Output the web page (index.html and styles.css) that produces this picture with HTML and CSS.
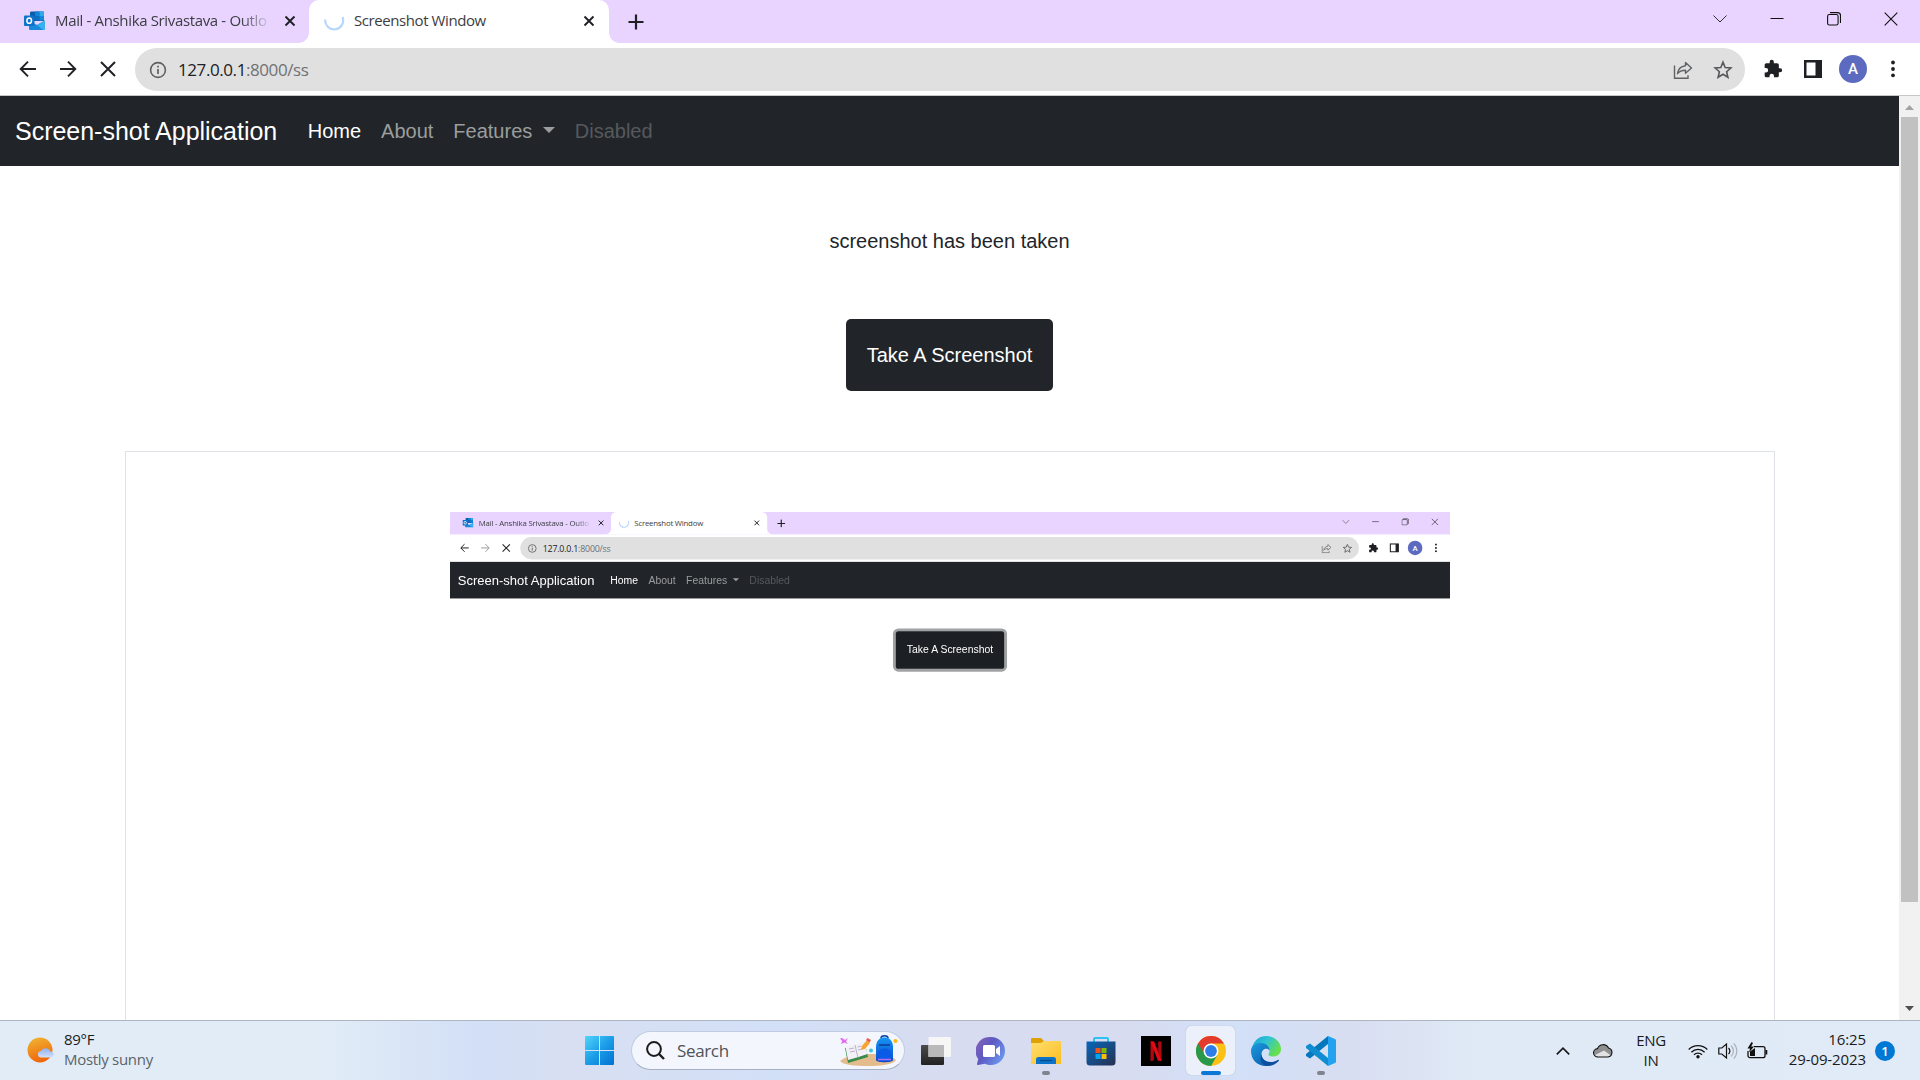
FILE: index.html
```html
<!DOCTYPE html>
<html lang="en">
<head>
<meta charset="utf-8">
<title>Screenshot Window</title>
<link rel="stylesheet" href="styles.css">
</head>
<body>
<svg class="sprite" aria-hidden="true">
  <defs>
    <linearGradient id="gWin" x2="1" y2="1"><stop offset="0" stop-color="#52d5fb"/><stop offset=".5" stop-color="#1b9de8"/><stop offset="1" stop-color="#0270d0"/></linearGradient>
    <linearGradient id="gSun" x2=".3" y2="1"><stop offset="0" stop-color="#f0b832"/><stop offset="1" stop-color="#f0680c"/></linearGradient>
    <linearGradient id="gCloud" x2="0" y2="1"><stop offset="0" stop-color="#8fb2f2"/><stop offset="1" stop-color="#d4e0fb"/></linearGradient>
    <linearGradient id="gChat" x2="1" y2=".6"><stop offset="0" stop-color="#8a62b4"/><stop offset=".5" stop-color="#5d5ac4"/><stop offset="1" stop-color="#6b93ea"/></linearGradient>
    <linearGradient id="gFolder" x2="1" y2="1"><stop offset="0" stop-color="#ffdf70"/><stop offset="1" stop-color="#fbbd22"/></linearGradient>
    <linearGradient id="gStore" x2="1" y2="1"><stop offset="0" stop-color="#0867bb"/><stop offset="1" stop-color="#27304f"/></linearGradient>
    <linearGradient id="gEdge" x2="1" y2=".5"><stop offset="0" stop-color="#1aa0dc"/><stop offset=".5" stop-color="#2fc3d3"/><stop offset="1" stop-color="#66e04c"/></linearGradient>
    <linearGradient id="gEdge2" x2="1" y2="1"><stop offset="0" stop-color="#1b9ce0"/><stop offset="1" stop-color="#0b4da0"/></linearGradient>
    <linearGradient id="gDark" x2="0" y2="1"><stop offset="0" stop-color="#4a4a4a"/><stop offset="1" stop-color="#222"/></linearGradient>
    <linearGradient id="gPack" x2="0" y2="1"><stop offset="0" stop-color="#1597f5"/><stop offset="1" stop-color="#0b49c8"/></linearGradient>
  </defs>
  <symbol id="outlook" viewBox="0 0 21 19">
    <path d="M6 1.500a1 1 0 0 1 1-1h12a1 1 0 0 1 1 1V10H6z" fill="#0a5cae"/>
    <path d="M11 .5h4.500V5H11z" fill="#1284d8"/><path d="M15.500 .5H19a1 1 0 0 1 1 1V5h-4.500z" fill="#30a9ea"/>
    <path d="M11 5h4.500v4.500H11z" fill="#0f6dc2"/><path d="M15.500 5H20v4.500h-4.500z" fill="#1488dc"/>
    <path d="M5 9.500l8 4.500 7.700-4.500V18a1 1 0 0 1-1 1H6a1 1 0 0 1-1-1z" fill="#1989da"/>
    <path d="M20.700 9.500V18a1 1 0 0 1-1 1H19l-6-5z" fill="#36b1ef"/>
    <rect x="0" y="4.500" width="10.500" height="10.500" rx="1" fill="#0f74c9"/>
    <ellipse cx="5.200" cy="9.700" rx="2.300" ry="2.600" fill="none" stroke="#fff" stroke-width="1.500"/>
  </symbol>
  <symbol id="close" viewBox="0 0 12 12"><path d="M1.500 1.500l9 9M10.500 1.500l-9 9" stroke="#1f2023" stroke-width="1.900" fill="none"/></symbol>
  <symbol id="spinner" viewBox="0 0 22 22"><path d="M2.200 8.500A9 9 0 1 0 19.500 6" fill="none" stroke="#b9d6fb" stroke-width="2.200"/></symbol>
  <symbol id="plus" viewBox="0 0 16 16"><path d="M8 .5v15M.5 8h15" stroke="#1f2023" stroke-width="2.200"/></symbol>
  <symbol id="chev" viewBox="0 0 14 14"><path d="M.5 3.500L7 10l6.500-6.500" fill="none" stroke="#333" stroke-width="1"/></symbol>
  <symbol id="min" viewBox="0 0 14 14"><path d="M.5 6.500h13" stroke="#111" stroke-width="1"/></symbol>
  <symbol id="restore" viewBox="0 0 14 14"><rect x=".6" y="2.500" width="10.500" height="10.500" rx="1.800" fill="none" stroke="#111" stroke-width="1.100"/><path d="M3 .6h7.500a3 3 0 0 1 3 3V11" fill="none" stroke="#111" stroke-width="1.100"/></symbol>
  <symbol id="wclose" viewBox="0 0 14 14"><path d="M.7.7l12.600 12.600M13.300.7L.7 13.300" stroke="#111" stroke-width="1.100"/></symbol>
  <symbol id="back" viewBox="0 0 18 18"><path d="M17 9H2M9 1.700L1.700 9 9 16.300" fill="none" stroke="currentColor" stroke-width="1.900"/></symbol>
  <symbol id="fwd" viewBox="0 0 18 18"><path d="M1 9h15M9 1.700L16.300 9 9 16.300" fill="none" stroke="currentColor" stroke-width="1.900"/></symbol>
  <symbol id="stop" viewBox="0 0 18 18"><path d="M2 2l14 14M16 2L2 16" stroke="currentColor" stroke-width="2"/></symbol>
  <symbol id="info" viewBox="0 0 18 18"><circle cx="9" cy="9" r="7.400" fill="none" stroke="#5f6063" stroke-width="1.600"/><path d="M9 8v5M9 4.700v1.800" stroke="#5f6063" stroke-width="1.700"/></symbol>
  <symbol id="share" viewBox="0 0 20 18"><path d="M1.500 4.500v12.700h13.500v-3" fill="none" stroke="#606266" stroke-width="1.400"/><path d="M12.500 1.500l6 5.500-6 5.200V9.200C9 9.200 6.500 10 4.500 12.700 5 8.500 7.500 5.300 12.500 4.700z" fill="none" stroke="#606266" stroke-width="1.400" stroke-linejoin="round"/></symbol>
  <symbol id="star" viewBox="0 0 20 20"><path d="M10 2.200l2.200 5.300 5.700.5-4.300 3.700 1.300 5.600-4.900-3-4.900 3 1.300-5.600L2.100 8l5.700-.5z" fill="none" stroke="#55575b" stroke-width="1.600"/></symbol>
  <symbol id="puzzle" viewBox="0 0 24 24"><path d="M20.500 11H19V7a2 2 0 0 0-2-2h-4V3.500a2.500 2.500 0 0 0-5 0V5H4a2 2 0 0 0-2 2v3.800h1.500a2.700 2.700 0 0 1 0 5.400H2V20a2 2 0 0 0 2 2h3.800v-1.500a2.700 2.700 0 0 1 5.400 0V22H17a2 2 0 0 0 2-2v-4h1.500a2.500 2.500 0 0 0 0-5z" fill="#1f2023"/></symbol>
  <symbol id="panel" viewBox="0 0 18 18"><path d="M0 0h18v18H0zM2.500 2.500v13h9v-13z" fill="#1f2023" fill-rule="evenodd"/></symbol>
  <symbol id="dots" viewBox="0 0 6 18"><circle cx="3" cy="2.500" r="1.900" fill="#1f2023"/><circle cx="3" cy="9" r="1.900" fill="#1f2023"/><circle cx="3" cy="15.300" r="1.900" fill="#1f2023"/></symbol>
</svg>

<div class="screen">
  <header class="chrome">
    <div class="tabstrip">
      <div class="tab">
        <svg class="favicon"><use href="#outlook"/></svg>
        <span class="tab-title fade">Mail - Anshika Srivastava - Outlo</span>
        <svg class="tab-close"><use href="#close"/></svg>
      </div>
      <div class="tab active">
        <svg class="loading"><use href="#spinner"/></svg>
        <span class="tab-title">Screenshot Window</span>
        <svg class="tab-close"><use href="#close"/></svg>
      </div>
      <svg class="new-tab"><use href="#plus"/></svg>
      <div class="controls">
        <svg><use href="#chev"/></svg><svg><use href="#min"/></svg><svg><use href="#restore"/></svg><svg><use href="#wclose"/></svg>
      </div>
    </div>
    <div class="toolbar">
      <span class="cell"><svg class="i18"><use href="#back"/></svg></span>
      <span class="cell"><svg class="i18"><use href="#fwd"/></svg></span>
      <span class="cell"><svg class="i18"><use href="#stop"/></svg></span>
      <div class="omnibox">
        <svg class="i18"><use href="#info"/></svg>
        <span class="url">127.0.0.1<i>:8000/ss</i></span>
        <span class="cell"><svg class="share"><use href="#share"/></svg></span>
        <span class="cell"><svg class="i20"><use href="#star"/></svg></span>
      </div>
      <span class="cell"><svg class="i20"><use href="#puzzle"/></svg></span>
      <span class="cell"><svg class="i18"><use href="#panel"/></svg></span>
      <span class="cell"><b class="avatar">A</b></span>
      <span class="cell"><svg class="dots"><use href="#dots"/></svg></span>
    </div>
  </header>

  <div class="viewport">
    <main class="page">
      <nav class="navbar">
        <a class="brand">Screen-shot Application</a>
        <a class="link on">Home</a><a class="link">About</a><a class="link drop">Features</a><a class="link off">Disabled</a>
      </nav>
      <p class="message">screenshot has been taken</p>
      <button class="shoot">Take A Screenshot</button>
      <section class="card">
        <div class="preview">
          <div class="preview-screen">
            <header class="chrome">
              <div class="tabstrip">
                <div class="tab">
                  <svg class="favicon"><use href="#outlook"/></svg>
                  <span class="tab-title fade">Mail - Anshika Srivastava - Outlo</span>
                  <svg class="tab-close"><use href="#close"/></svg>
                </div>
                <div class="tab active">
                  <svg class="loading"><use href="#spinner"/></svg>
                  <span class="tab-title">Screenshot Window</span>
                  <svg class="tab-close"><use href="#close"/></svg>
                </div>
                <svg class="new-tab"><use href="#plus"/></svg>
                <div class="controls">
                  <svg><use href="#chev"/></svg><svg><use href="#min"/></svg><svg><use href="#restore"/></svg><svg><use href="#wclose"/></svg>
                </div>
              </div>
              <div class="toolbar">
                <span class="cell"><svg class="i18"><use href="#back"/></svg></span>
                <span class="cell muted"><svg class="i18"><use href="#fwd"/></svg></span>
                <span class="cell"><svg class="i18"><use href="#stop"/></svg></span>
                <div class="omnibox">
                  <svg class="i18"><use href="#info"/></svg>
                  <span class="url">127.0.0.1<i>:8000/ss</i></span>
                  <span class="cell"><svg class="share"><use href="#share"/></svg></span>
                  <span class="cell"><svg class="i20"><use href="#star"/></svg></span>
                </div>
                <span class="cell"><svg class="i20"><use href="#puzzle"/></svg></span>
                <span class="cell"><svg class="i18"><use href="#panel"/></svg></span>
                <span class="cell"><b class="avatar">A</b></span>
                <span class="cell"><svg class="dots"><use href="#dots"/></svg></span>
              </div>
            </header>
            <nav class="navbar">
              <a class="brand">Screen-shot Application</a>
              <a class="link on">Home</a><a class="link">About</a><a class="link drop">Features</a><a class="link off">Disabled</a>
            </nav>
            <button class="shoot focus">Take A Screenshot</button>
          </div>
        </div>
      </section>
    </main>
    <div class="scrollbar">
      <svg width="9" height="5"><path d="M0 5L4.500 0 9 5z" fill="#a3a3a3"/></svg>
      <div class="thumb"></div>
      <svg width="9" height="5"><path d="M0 0h9L4.500 5z" fill="#505050"/></svg>
    </div>
  </div>

  <footer class="taskbar">
    <div class="weather">
      <svg width="28" height="26" viewBox="0 0 28 26"><circle cx="13" cy="13" r="12.500" fill="url(#gSun)"/><path d="M13.500 20.500a3.300 3.300 0 0 1 .3-6.500 5.200 5.200 0 0 1 9.500.6 3 3 0 0 1 1 5.900z" fill="url(#gCloud)"/></svg>
      <div><p>89°F</p><p class="dim">Mostly sunny</p></div>
    </div>
    <div class="dock">
      <svg class="start" width="29" height="29" viewBox="0 0 29 29"><path d="M1 0h13v14H0V1a1 1 0 0 1 1-1zM15 0h13a1 1 0 0 1 1 1v13H15zM0 15h14v14H1a1 1 0 0 1-1-1zM15 15h14v13a1 1 0 0 1-1 1H15z" fill="url(#gWin)"/></svg>
      <div class="search">
        <svg width="19" height="19" viewBox="0 0 19 19"><circle cx="8" cy="8" r="6.900" fill="none" stroke="#1c1c1c" stroke-width="2"/><path d="M13 13l5 5" stroke="#1c1c1c" stroke-width="2.400"/></svg>
        <span>Search</span>
        <svg width="60" height="32" viewBox="0 0 60 32">
          <path d="M2 26c8-6 14-7 28-7s22 1 28 6c-2 4-14 6-28 6S5 30 2 26z" fill="#e4bb8d"/>
          <path d="M4 3l3 2 3-2-2 3.500L10 9 6.500 7.500 3 9l1.200-3L2 3.500z" fill="#e36bf0"/>
          <path d="M7 13l20-4 3 13-20 6z" fill="#378c46"/><path d="M7.500 12l9-2.500 10-2.500 3 12-9 3-10.500 3z" fill="#f3f0f8"/><path d="M17 10l3 13M11 14l5-1M12 17l5-1M19.500 12l4-1M20 15l4-1" stroke="#a8a5b8" stroke-width=".8"/>
          <path d="M23 15l1-4 5-6 3 3-5 6z" fill="#f6a534"/><path d="M28 5l1.500-2 3.500 2-1.500 2.500z" fill="#ef5b4c"/>
          <circle cx="33" cy="15.500" r="2" fill="#3fc4dd"/><circle cx="57.500" cy="6" r="2" fill="#fdb515"/>
          <path d="M43 3c0-3 7-3 7 0" fill="none" stroke="#0b3f9c" stroke-width="1.500"/>
          <path d="M38 12c0-13 17-13 17 0v13c0 3-17 3-17 0z" fill="url(#gPack)"/><path d="M40 18c0-6 13-6 13 0v8H40z" fill="#0a5ce6"/><path d="M41 10h11" stroke="#0a3b98" stroke-width="1.500"/><path d="M40 24.500h13" stroke="#b56cf2" stroke-width="1.500"/>
        </svg>
      </div>
      <div class="apps">
        <span class="app"><svg width="30" height="30" viewBox="0 0 30 30"><rect x="0" y="9" width="23" height="20" rx="1" fill="url(#gDark)"/><rect x="7.500" y="1" width="22.500" height="20" rx="1" fill="#f6f6f6"/><path d="M7.500 9H23v12H7.500z" fill="#b9b9b9"/></svg></span>
        <span class="app"><svg width="30" height="30" viewBox="0 0 30 30"><path d="M15 1a14 14 0 0 1 0 28c-2.500 0-4.500-.4-6-1.200L2 29c-1 0-1.300-1-.8-1.700L2.200 23A14 14 0 0 1 15 1z" fill="url(#gChat)"/><rect x="7" y="9" width="12" height="12" rx="1.500" fill="#fff"/><path d="M20 13l4-3v10l-4-3z" fill="#fff"/></svg></span>
        <span class="app run"><svg width="30" height="30" viewBox="0 0 30 30"><path d="M0 3a1 1 0 0 1 1-1h9l3 3h16v9H0z" fill="#e0a106"/><path d="M0 7h10l3-2h16a1 1 0 0 1 1 1v22H0z" fill="url(#gFolder)"/><path d="M5 28v-4.500a2.500 2.500 0 0 1 2.500-2.500h15a2.500 2.500 0 0 1 2.500 2.500V28z" fill="#0c74c8"/><path d="M9 24.500h12" stroke="#084b88" stroke-width="1.200"/></svg></span>
        <span class="app"><svg width="30" height="30" viewBox="0 0 30 30"><path d="M8 7V3a1 1 0 0 1 1-1h12a1 1 0 0 1 1 1v4" fill="none" stroke="#2cc3f4" stroke-width="2"/><path d="M.5 5.500h29V26a3.500 3.500 0 0 1-3.500 3.500H4A3.500 3.500 0 0 1 .5 26z" fill="url(#gStore)"/><path d="M9.500 12h5v5h-5z" fill="#f1511b"/><path d="M15.500 12h5v5h-5z" fill="#80bc06"/><path d="M9.500 18h5v5h-5z" fill="#03a5ef"/><path d="M15.500 18h5v5h-5z" fill="#fdba08"/></svg></span>
        <span class="app"><svg width="30" height="30" viewBox="0 0 30 30"><path d="M0 0h30v30H0z"/><path d="M9.500 5.500h3.300v19l-3.300.4zM17.200 5.500h3.300v19.400l-3.300-.4z" fill="#b00710"/><path d="M9.500 5.500h3.600l7.400 19.400-3.600-.4z" fill="#e50914"/></svg></span>
        <span class="app current"><svg width="30" height="30" viewBox="0 0 30 30"><circle cx="15" cy="15" r="15" fill="#fbc116"/><path d="M2 7.500A15 15 0 0 0 15 30l6.500-11.200L15 15V7.500z" fill="#28994a"/><path d="M2 7.500A15 15 0 0 1 28 7.500H15a7.500 7.500 0 0 0-7 5.500L7 15.500z" fill="#e33b2e"/><circle cx="15" cy="15" r="7.500" fill="#fff"/><circle cx="15" cy="15" r="5.900" fill="#2f7de9"/></svg></span>
        <span class="app"><svg width="30" height="30" viewBox="0 0 30 30"><path d="M1 12C3 4 8.500 0 15 0c9 0 15 6.500 15 13 0 5-4 7.500-8 7.500-3 0-4.500-1-4.500-2 0-.8 1-1.200 1-3.500 0-3-3-6-8-6-4 0-7.500 1.200-9.500 3z" fill="url(#gEdge)"/><path d="M0 15C0 9.500 5 7 9.500 7c5.500 0 9 3.500 9 7.500-2-3-8-2-8 4 0 5 5 8 9 8 3.500 0 6-1 8-3C25 27.500 20.500 30 15 30 6 30 0 23.500 0 15z" fill="url(#gEdge2)"/><path d="M10.500 18c0 5 4.500 8 9 8 3 0 5-.7 7.200-2.100 1-.6 1.600.3 1 1C24.500 28.500 20.500 30 16 30c-5-1-8-6-5.500-12z" fill="#0d4f9f"/></svg></span>
        <span class="app run"><svg width="30" height="30" viewBox="0 0 30 30"><path d="M22 0l7 3a2 2 0 0 1 1 2v20a2 2 0 0 1-1 2l-7 3z" fill="#23a2f0"/><path d="M22 0v8L4 22.500 0 20v-2z" fill="#0577bd"/><path d="M22 30v-8L4 7.500 0 10v2z" fill="#108cd0"/></svg></span>
      </div>
    </div>
    <div class="tray">
      <svg class="up" width="14" height="8" viewBox="0 0 14 8"><path d="M.8 7.300L7 1.200l6.200 6.100" fill="none" stroke="#1a1a1a" stroke-width="1.700"/></svg>
      <svg class="cloud" width="20" height="15" viewBox="0 0 20 15"><path d="M5 14a4.200 4.200 0 0 1-.5-8.400A6 6 0 0 1 15.500 5 4.600 4.600 0 0 1 15 14z" fill="#8f8f8f"/><path d="M2 12l9-4.500 7 5L15 14H5z" fill="#e2e2e2"/><path d="M5 14a4.200 4.200 0 0 1-.5-8.400A6 6 0 0 1 15.500 5 4.600 4.600 0 0 1 15 14z" fill="none" stroke="#111" stroke-width="1.100"/></svg>
      <div class="lang"><p>ENG</p><p>IN</p></div>
      <svg class="wifi" width="20" height="16" viewBox="0 0 20 16"><path d="M.7 6.500a13 13 0 0 1 18.600 0M3.400 9.200a9.300 9.300 0 0 1 13.200 0M6 11.800a5.700 5.700 0 0 1 8 0" fill="none" stroke="#111" stroke-width="1.300"/><circle cx="10" cy="13.700" r="1.700" fill="#111"/></svg>
      <svg class="vol" width="20" height="18" viewBox="0 0 20 18"><path d="M.8 6h3L8.500 2v14L3.800 12h-3z" fill="none" stroke="#111" stroke-width="1.200"/><path d="M10.500 6a4 4 0 0 1 0 6" fill="none" stroke="#111" stroke-width="1.200"/><path d="M13 3.500a7.500 7.500 0 0 1 0 11M15.700 1.300a11 11 0 0 1 0 15.400" fill="none" stroke="#aab2ba" stroke-width="1.200"/></svg>
      <svg class="bat" width="21" height="18" viewBox="0 0 21 18"><path d="M7 4.700h9a2 2 0 0 1 2 2v7a2 2 0 0 1-2 2H3a2 2 0 0 1-2-2V9" fill="none" stroke="#111" stroke-width="1.300"/><path d="M3 14V9.500L8 6v8z" fill="#111"/><path d="M18.500 8h1.800v4.500h-1.800z" fill="#111"/><path d="M4.500 0L.5 6.500H3L2 10.500 7 4.500H4.200L6 1z" fill="#111"/></svg>
      <div class="clock"><p>16:25</p><p>29-09-2023</p></div>
      <span class="badge">1</span>
    </div>
  </footer>
</div>
</body>
</html>
```

FILE: styles.css
```css
* { box-sizing: border-box; }
body { margin: 0; font-family: "Liberation Sans", sans-serif; overflow: hidden; }
p { margin: 0; }
svg { display: block; flex: none; }
.sprite { position: absolute; width: 0; height: 0; }
.screen { width: 1920px; height: 1080px; display: flex; flex-direction: column; background: #fff; }

/* Browser window */
.chrome { flex: none; height: 96px; font-family: "Open Sans", sans-serif; border-bottom: 1px solid #c6c7c9; background: #fff; }
.tabstrip { height: 43px; background: #e8d4ff; display: flex; align-items: center; }
.tab { width: 309px; height: 43px; padding: 0 13px 2px 24px; display: flex; align-items: center; }
.tab.active { position: relative; width: 300px; padding: 0 14px 2px 14px; background: #fff; border-radius: 10px 10px 0 0; }
.tab.active::before, .tab.active::after { content: ""; position: absolute; bottom: 0; width: 10px; height: 10px; }
.tab.active::before { left: -10px; background: radial-gradient(circle at 0 0, transparent 9.500px, #fff 10px); }
.tab.active::after { right: -10px; background: radial-gradient(circle at 100% 0, transparent 9.500px, #fff 10px); }
.favicon { width: 21px; height: 19px; margin-right: 10px; }
.loading { width: 22px; height: 22px; margin: 2px 9px 0 0; }
.tab-title { flex: 1; min-width: 0; padding-bottom: 2px; font-size: 15px; line-height: 20px; letter-spacing: -.35px; color: #3c3d42; white-space: nowrap; }
.active .tab-title { letter-spacing: -.42px; }
.fade { -webkit-mask-image: linear-gradient(90deg, #000 86%, transparent); mask-image: linear-gradient(90deg, #000 86%, transparent); }
.tab-close { width: 12px; height: 12px; margin-left: 13px; }
.new-tab { width: 16px; height: 16px; margin-left: 19px; }
.controls { margin-left: auto; display: flex; padding-bottom: 5px; }
.controls svg { width: 14px; height: 14px; margin: 0 21.650px; }
.toolbar { height: 52px; display: flex; align-items: center; padding: 0 7px 0 7.500px; color: #202124; }
.cell { flex: none; width: 40px; display: flex; justify-content: center; }
.muted { color: #9a9b9e; }
.i18 { width: 18px; height: 18px; }
.i20 { width: 20px; height: 20px; }
.share { width: 20px; height: 18px; }
.dots { width: 6px; height: 18px; }
.omnibox { flex: 1; height: 43px; margin: 1px 8px 0 7.500px; padding: 0 2px 0 13.500px; border-radius: 22px; background: #e0e0e0; display: flex; align-items: center; }
.url { flex: 1; margin-left: 11.500px; font-size: 17px; letter-spacing: -.42px; color: #202124; }
.url i { font-style: normal; color: #707174; }
.avatar { width: 28px; height: 28px; border-radius: 50%; background: #5c6bc0; color: #fff; font: 500 15px/28px Roboto, sans-serif; text-align: center; }

/* Web page */
.viewport { flex: 1; min-height: 0; display: flex; overflow: hidden; }
.page { width: 1899px; display: flex; flex-direction: column; align-items: center; overflow: hidden; }
.navbar { flex: none; align-self: stretch; height: 70px; padding: 0 15px; background: #212529; display: flex; align-items: center; white-space: nowrap; }
.brand { font-size: 25px; color: #fff; margin-right: 20.500px; letter-spacing: -.02px; }
.link { font-size: 20px; padding: 0 10px; color: #9b9d9e; }
.link.on { color: #fff; }
.link.off { color: #56595c; }
.drop::after { content: ""; display: inline-block; margin-left: 10.500px; vertical-align: 5px; border: 6px solid transparent; border-top-color: currentColor; border-bottom: 0; }
.message { margin-top: 60px; font-size: 20px; line-height: 30px; color: #212529; }
.shoot { flex: none; width: 207px; height: 72px; margin-top: 63px; padding: 0; border: 0; border-radius: 5px; background: #212529; color: #fff; font: 20px "Liberation Sans", sans-serif; white-space: nowrap; }
.card { flex: none; width: 1650px; height: 900px; margin: 60px 0 0 1px; padding-top: 60px; border: 1px solid #dee2e6; display: flex; justify-content: center; }
.preview { width: 1000px; height: 563px; }
.preview-screen { width: 1920px; height: 1080px; transform: scale(.52083); transform-origin: 0 0; display: flex; flex-direction: column; align-items: center; }
.preview-screen .chrome { align-self: stretch; }
.shoot.focus { width: 208px; margin-top: 62.500px; background: #1c1f23; box-shadow: 0 0 0 5.500px #a0a2a4; }
.scrollbar { flex: 1; background: #f1f1f1; display: flex; flex-direction: column; align-items: center; justify-content: space-between; padding: 9px 0 9px; }
.thumb { width: 17px; height: 785px; margin: 7px 0 auto; background: #c1c1c1; }

/* Taskbar */
.taskbar { flex: none; height: 60px; border-top: 1px solid #aeb6c0; font-family: "Open Sans", sans-serif; font-size: 15px; line-height: 20px; color: #1b1b1b; display: grid; grid-template-columns: 585px 763px 1fr; background: linear-gradient(90deg, #e1ecf7 0, #e1ecf7 330px, #d2dff6 480px, #d8dff2 570px, #d2e0f7 780px, #d7dcf0 930px, #d7dcf0 1130px, #d2e0f8 1240px, #d8def1 1350px, #e0eaf6 1480px, #e1ebf7 100%); }
.weather { display: flex; align-items: center; padding-left: 27px; gap: 9px; letter-spacing: -.3px; }
.weather svg { margin-bottom: 2px; }
.weather div { padding-bottom: 4px; }
.dim { color: #5c6268; }
.dock { display: flex; align-items: center; }
.search { width: 274px; height: 39px; margin-left: 17px; padding: 0 6px 0 14px; border: 1px solid #c2cbe0; border-bottom-color: #a7b0c4; border-radius: 20px; background: #f3f6fd; display: flex; align-items: center; font-size: 17px; color: #505256; letter-spacing: -.35px; }
.search span { flex: 1; margin-left: 12px; }
.apps { display: grid; grid-template-columns: repeat(8, 55px); margin-left: 3px; }
.app { position: relative; justify-self: center; width: 49px; height: 49px; display: flex; align-items: center; justify-content: center; border-radius: 5px; }
.current { background: #ebf0fa; box-shadow: 0 0 1px #98a3b8; }
.run::after, .current::after { content: ""; position: absolute; bottom: 0; width: 8px; height: 4px; border-radius: 2px; background: #7f848e; }
.current::after { width: 20px; background: #0a78d4; }
.tray { display: flex; align-items: center; padding-left: 208px; }
.cloud { margin-left: 23px; }
.lang { width: 30px; margin-left: 23px; padding-bottom: 2px; text-align: center; letter-spacing: -.3px; }
.wifi { margin-left: 22px; }
.vol { margin-left: 10px; }
.bat { margin-left: 9px; }
.clock { width: 98px; padding-bottom: 4px; text-align: right; letter-spacing: -.1px; }
.badge { width: 20px; height: 20px; margin-left: 9px; border-radius: 50%; background: #0078d4; color: #fff; font-size: 13px; font-weight: 600; line-height: 20px; text-align: center; }
```
